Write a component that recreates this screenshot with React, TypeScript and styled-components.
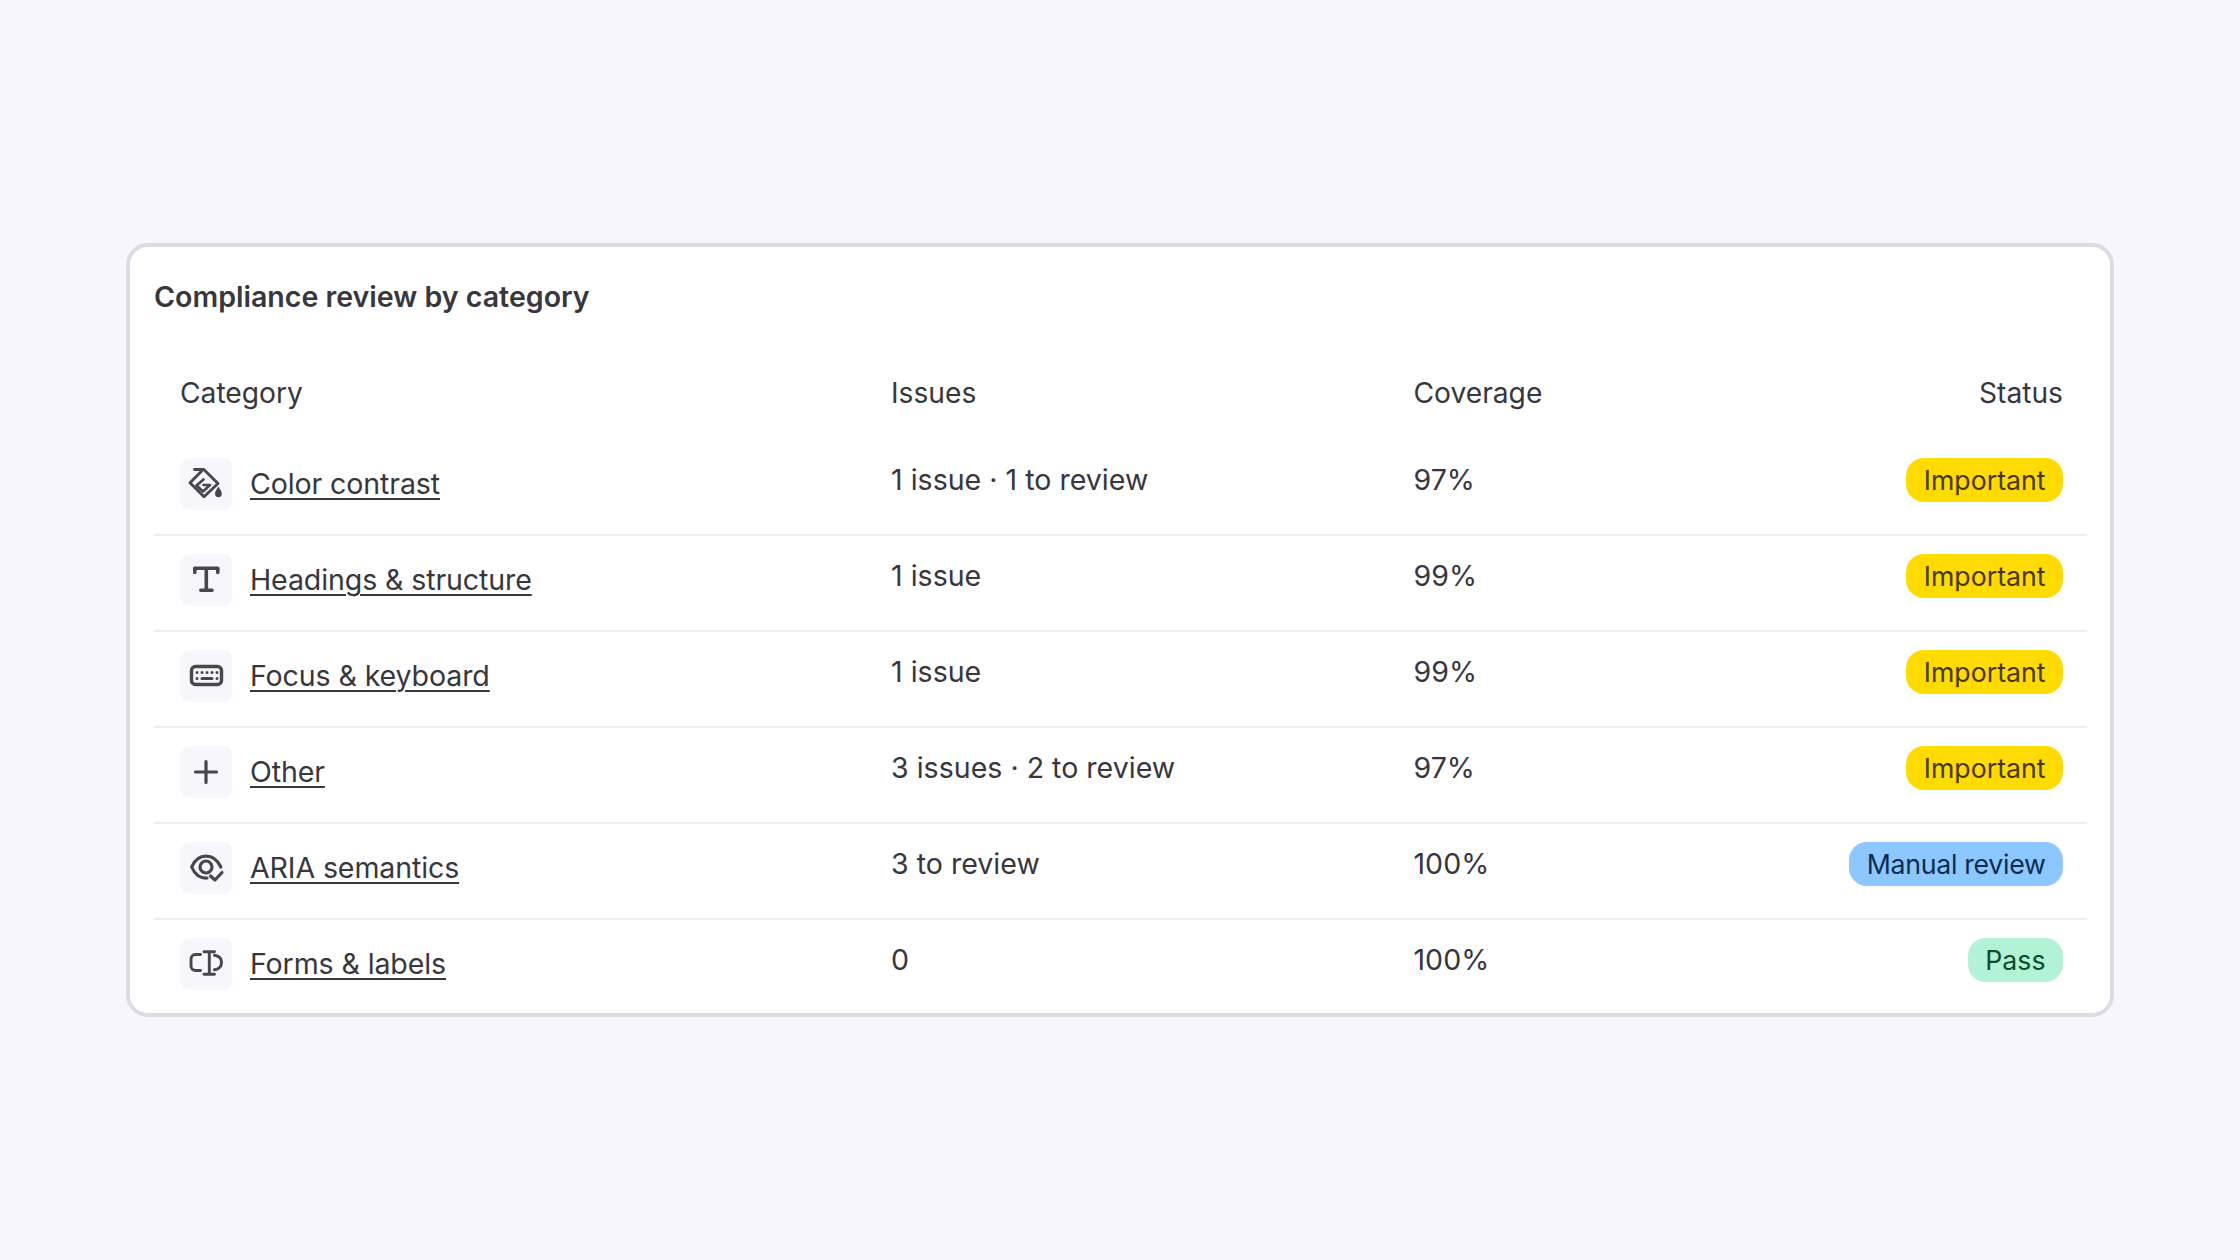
import React from "react";
import styled, { createGlobalStyle } from "styled-components";

const GlobalStyle = createGlobalStyle`
	html, body {
		margin: 0;
		padding: 0;
		background: #f6f6fc;
		font-family: Inter, "Noto Sans", sans-serif;
		color: #37373d;
	}
`;

type Tone = "important" | "manual" | "pass";

const toneColors: Record<Tone, { bg: string; fg: string; tracking: string }> = {
	important: { bg: "#ffdb00", fg: "#453800", tracking: "0" },
	manual: { bg: "#8cc8ff", fg: "#0b2c50", tracking: "-0.3px" },
	pass: { bg: "#b2f2d5", fg: "#0e4a2e", tracking: "0" },
};

const stroke = {
	fill: "none",
	stroke: "#47474e",
	strokeWidth: 3.2,
	strokeLinecap: "round" as const,
	strokeLinejoin: "round" as const,
};

const BucketIcon = () => (
	<svg width="52" height="52" viewBox="0 0 52 52">
		<path {...stroke} strokeWidth={2.9} d="M14.5 11.5H23.8L38 25.5L24 38.8L10 24.7L21.5 13.2" />
		<path {...stroke} strokeWidth={2.7} d="M23.5 21.5L16.5 27.5L23 33.5L30 27H23.5" />
		<path fill="#47474e" d="M38.4 28.5C39.6 31 41.8 33 41.8 35.8A3.4 3.4 0 0 1 35 35.8C35 33 37.2 31 38.4 28.5Z" />
	</svg>
);

const TypeIcon = () => (
	<svg width="52" height="52" viewBox="0 0 52 52">
		<path {...stroke} strokeWidth={3.6} d="M14.8 18.5V14.2H37.8V18.5M26.3 14.2V36.2M20.8 36.2H32" />
	</svg>
);

const KeyboardIcon = () => (
	<svg width="52" height="52" viewBox="0 0 52 52">
		<rect {...stroke} strokeWidth={3.4} x="11.5" y="16.5" width="30" height="18" rx="4" />
		<path
			{...stroke}
			strokeWidth={3}
			d="M17 22.5H17.01M22 22.5H22.01M27 22.5H27.01M32 22.5H32.01M37 22.5H37.01M17 28.5H17.01M22 28.5H32M37 28.5H37.01"
		/>
	</svg>
);

const PlusIcon = () => (
	<svg width="52" height="52" viewBox="0 0 52 52">
		<path {...stroke} d="M26 15.5V36.5M15.5 26H36.5" />
	</svg>
);

const EyeCheckIcon = () => (
	<svg width="52" height="52" viewBox="0 0 52 52">
		<circle {...stroke} cx="26" cy="25" r="6" />
		<path {...stroke} d="M27 36C20 36.4 14.6 32 11.7 25C14.6 18.2 20 14.2 26 14.2C32.4 14.2 37.6 18.2 40.8 25" />
		<path {...stroke} d="M30.5 34L35 38L42 30.5" />
	</svg>
);

const FormsIcon = () => (
	<svg width="52" height="52" viewBox="0 0 52 52">
		<path {...stroke} strokeWidth={2.9} d="M20.5 16.5H15.5A4.5 4.5 0 0 0 11 21V28A4.5 4.5 0 0 0 15.5 32.5H20.5" />
		<path {...stroke} strokeWidth={2.9} d="M24 13.8H34.5M29.3 13.8V36.2M24 36.2H34.5" />
		<path {...stroke} strokeWidth={2.9} d="M34.5 17.2C38.8 17.8 41.5 20.4 41.5 24.5C41.5 28.6 38.8 31.2 34.5 31.8" />
	</svg>
);

const rows: {
	icon: React.ReactNode;
	name: string;
	issues: string;
	coverage: string;
	status: string;
	tone: Tone;
}[] = [
	{ icon: <BucketIcon />, name: "Color contrast", issues: "1 issue · 1 to review", coverage: "97%", status: "Important", tone: "important" },
	{ icon: <TypeIcon />, name: "Headings & structure", issues: "1 issue", coverage: "99%", status: "Important", tone: "important" },
	{ icon: <KeyboardIcon />, name: "Focus & keyboard", issues: "1 issue", coverage: "99%", status: "Important", tone: "important" },
	{ icon: <PlusIcon />, name: "Other", issues: "3 issues · 2 to review", coverage: "97%", status: "Important", tone: "important" },
	{ icon: <EyeCheckIcon />, name: "ARIA semantics", issues: "3 to review", coverage: "100%", status: "Manual review", tone: "manual" },
	{ icon: <FormsIcon />, name: "Forms & labels", issues: "0", coverage: "100%", status: "Pass", tone: "pass" },
];

const App: React.FC = () => {
	return (
		<Page>
			<GlobalStyle />
			<Card>
				<Title>Compliance review by category</Title>
				<HeaderRow>
					<span>Category</span>
					<span>Issues</span>
					<span>Coverage</span>
					<StatusHead>Status</StatusHead>
				</HeaderRow>
				{rows.map((row) => (
					<Row key={row.name}>
						<NameCell>
							<IconBox>{row.icon}</IconBox>
							<NameLink href="#">{row.name}</NameLink>
						</NameCell>
						<Cell>{row.issues}</Cell>
						<Cell>{row.coverage}</Cell>
						<StatusCell>
							<Badge $tone={row.tone}>{row.status}</Badge>
						</StatusCell>
					</Row>
				))}
			</Card>
		</Page>
	);
};

export default App;

const Page = styled.div`
	display: flex;
	align-items: center;
	justify-content: center;
	min-height: 100vh;
`;

const Card = styled.section`
	box-sizing: border-box;
	width: 1988px;
	height: 774px;
	padding: 32px 23px 0 24px;
	background: #ffffff;
	border: 4px solid #dcdce4;
	border-radius: 22px;
`;

const Title = styled.h2`
	margin: 0;
	font-size: 28.57px;
	line-height: 36px;
	font-weight: 600;
	color: #37373d;
`;

const columns = "711px 522.5px 1fr";

const HeaderRow = styled.div`
	box-sizing: border-box;
	display: grid;
	grid-template-columns: ${columns} auto;
	align-items: center;
	height: 125px;
	padding: 30.5px 24px 0 26px;
	font-size: 28.2px;
`;

const StatusHead = styled.span`
	text-align: right;
`;

const Row = styled.div`
	box-sizing: border-box;
	display: grid;
	grid-template-columns: ${columns} auto;
	align-items: start;
	height: 96px;
	padding: 18px 24px 0 26px;
	border-bottom: 2px solid #ececf2;
	&:last-child {
		border-bottom: none;
	}
`;

const Cell = styled.div`
	font-size: 28.57px;
	line-height: 44px;
`;

const NameCell = styled.div`
	display: flex;
	align-items: center;
	gap: 18px;
`;

const IconBox = styled.span`
	display: flex;
	width: 52px;
	height: 52px;
	flex: none;
	background: #f7f6fa;
	border-radius: 9px;
`;

const NameLink = styled.a`
	font-size: 28.57px;
	line-height: 44px;
	letter-spacing: -0.12px;
	color: #37373d;
	text-decoration: underline;
	text-decoration-thickness: 2px;
	text-underline-offset: 4px;
`;

const StatusCell = styled.div`
	display: flex;
	justify-content: flex-end;
	grid-column: 4;
`;

const Badge = styled.span<{ $tone: Tone }>`
	box-sizing: border-box;
	height: 44px;
	padding: 0 17.5px;
	font-size: 26.7px;
	line-height: 45px;
	letter-spacing: ${(p) => toneColors[p.$tone].tracking};
	border-radius: 18px;
	background: ${(p) => toneColors[p.$tone].bg};
	color: ${(p) => toneColors[p.$tone].fg};
`;
